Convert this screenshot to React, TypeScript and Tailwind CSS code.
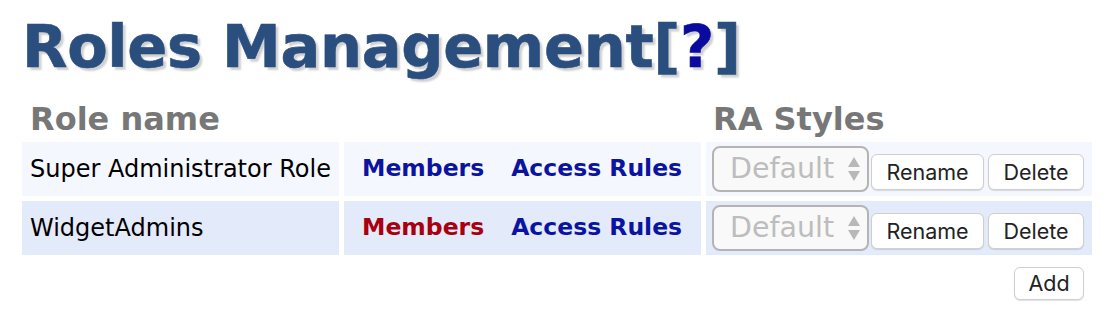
import React from "react";

const rows = [
  { name: "Super Administrator Role", bg: "bg-[#f5f7fe]", membersColor: "text-[#0a14a0]" },
  { name: "WidgetAdmins", bg: "bg-[#e3eafa]", membersColor: "text-[#a8000f]" },
];

function Select() {
  return (
    <div className="w-[157px] h-[46px] border-2 border-[#b4b4b4] rounded-[8px] bg-[#f9f9f9] flex items-center justify-between pl-[16px] pr-[6px] shrink-0">
      <span className="text-[28.5px] text-[#bdbdbd] leading-none" style={{ fontFamily: '"DejaVu Sans", Verdana, sans-serif' }}>Default</span>
      <svg width="14" height="30" viewBox="0 0 14 30">
        <path d="M7 3 L13 13 L1 13 Z" fill="#b8b8b8" />
        <path d="M7 27 L13 17 L1 17 Z" fill="#b8b8b8" />
      </svg>
    </div>
  );
}

function Btn({ children, w, h = "h-[36px]" }: { children: React.ReactNode; w: string; h?: string }) {
  return (
    <button
      className={`${w} ${h} bg-white border border-[#cfcfcf] rounded-[6px] shadow-[0_1px_1px_rgba(0,0,0,0.12)] text-[21.5px] text-[#222] flex items-center justify-center`}
      style={{ fontFamily: 'Inter, "Liberation Sans", sans-serif' }}
    >
      {children}
    </button>
  );
}

export default function App() {
  return (
    <div className="w-[1110px] h-[328px] bg-white" style={{ fontFamily: '"DejaVu Sans", Verdana, sans-serif' }}>
      <h1
        className="pl-[22px] pt-[10px] text-[59px] font-bold leading-[74px] text-[#2a4e7e] tracking-[-0.3px]"
        style={{ textShadow: "3px 3px 2px #d0d0d0", WebkitTextStroke: "0.6px #2a4e7e" }}
      >
        Roles Management[<span className="text-[#0a0a9e]" style={{ WebkitTextStroke: "0.6px #0a0a9e" }}>?</span>]
      </h1>
      <div className="pl-[22px] mt-[12px]">
        <div className="grid grid-cols-[317px_357px_386px] gap-x-[5px]">
          <div className="h-[46px] pl-[8px] text-[32px] font-bold text-[#777] flex items-center">Role name</div>
          <div />
          <div className="h-[46px] pl-[7px] text-[32px] font-bold text-[#777] flex items-center">RA Styles</div>
        </div>
        <div className="grid grid-cols-[317px_357px_386px] gap-[5px]">
          {rows.map((r) => (
            <React.Fragment key={r.name}>
              <div className={`${r.bg} h-[54px] pl-[8px] flex items-center text-[24px] text-black`}>{r.name}</div>
              <div className={`${r.bg} h-[54px] pl-[18px] flex items-center gap-[27px] text-[23.5px] font-bold`}>
                <span className={r.membersColor}>Members</span>
                <span className="text-[#0a14a0]">Access Rules</span>
              </div>
              <div className={`${r.bg} h-[54px] pl-[6px] flex items-center`}>
                <Select />
                <div className="flex items-center gap-[4px] ml-[2px] mt-[6px]">
                  <Btn w="w-[113px]">Rename</Btn>
                  <Btn w="w-[96px]">Delete</Btn>
                </div>
              </div>
            </React.Fragment>
          ))}
        </div>
        <div className="w-[1070px] flex justify-end mt-[12px] pr-[8px]">
          <Btn w="w-[70px]" h="h-[33px]">Add</Btn>
        </div>
      </div>
    </div>
  );
}
